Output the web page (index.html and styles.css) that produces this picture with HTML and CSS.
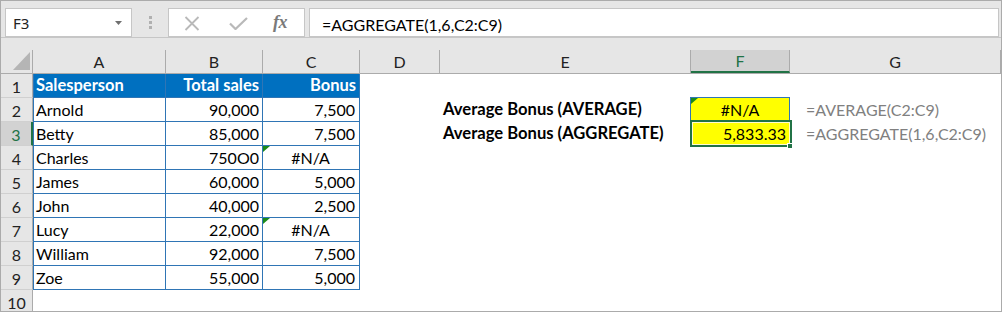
FILE: index.html
```html
<!DOCTYPE html>
<html lang="en">
<head>
<meta charset="utf-8">
<title>Average Bonus</title>
<link rel="stylesheet" href="styles.css">
</head>
<body>
<div class="app">
  <div class="formula-bar">
    <div class="name-box">
      <span>F3</span>
      <svg class="caret" width="7" height="4" viewBox="0 0 7 4"><path d="M0 0H7L3.5 4Z" fill="#6f6f6f"/></svg>
    </div>
    <div class="grip"><i></i><i></i><i></i></div>
    <div class="fx-buttons">
      <svg class="btn-x" width="16" height="15" viewBox="0 0 16 15"><path d="M1.5 1L14.5 14M14.5 1L1.5 14" stroke="#b9b9b9" stroke-width="1.8" fill="none"/></svg>
      <svg class="btn-ok" width="19" height="13" viewBox="0 0 19 13"><path d="M1 6.5L6.5 12L18 1" stroke="#b9b9b9" stroke-width="2.2" fill="none"/></svg>
      <span class="fx">fx</span>
    </div>
    <div class="formula-input">=AGGREGATE(1,6,C2:C9)</div>
  </div>

  <div class="sheet">
    <!-- column headers -->
    <div class="corner"><span class="corner-box"><svg width="17" height="18" viewBox="0 0 17 18"><path d="M17 0V18H0Z" fill="#b5b5b5"/></svg></span></div>
    <div class="col-head"><span>A</span></div>
    <div class="col-head"><span>B</span></div>
    <div class="col-head"><span>C</span></div>
    <div class="col-head"><span>D</span></div>
    <div class="col-head"><span>E</span></div>
    <div class="col-head active"><span>F</span></div>
    <div class="col-head"><span>G</span></div>

    <!-- row 1 -->
    <div class="row-head">1</div>
    <div class="cell t th first">Salesperson</div>
    <div class="cell t th num">Total sales</div>
    <div class="cell t th num">Bonus</div>
    <div class="cell"></div><div class="cell"></div><div class="cell"></div><div class="cell"></div>

    <!-- row 2 -->
    <div class="row-head">2</div>
    <div class="cell t first">Arnold</div>
    <div class="cell t num">90,000</div>
    <div class="cell t num c">7,500</div>
    <div class="cell"></div>
    <div class="cell label">Average Bonus (AVERAGE)</div>
    <div class="cell result avg err-mark">#N/A</div>
    <div class="cell note">=AVERAGE(C2:C9)</div>

    <!-- row 3 -->
    <div class="row-head active">3</div>
    <div class="cell t first">Betty</div>
    <div class="cell t num">85,000</div>
    <div class="cell t num c">7,500</div>
    <div class="cell"></div>
    <div class="cell label">Average Bonus (AGGREGATE)</div>
    <div class="cell result agg selected">5,833.33<span class="fill-handle"></span></div>
    <div class="cell note">=AGGREGATE(1,6,C2:C9)</div>

    <!-- row 4 -->
    <div class="row-head">4</div>
    <div class="cell t first">Charles</div>
    <div class="cell t num">750O0</div>
    <div class="cell t err c err-mark">#N/A</div>
    <div class="cell"></div><div class="cell"></div><div class="cell"></div><div class="cell"></div>

    <!-- row 5 -->
    <div class="row-head">5</div>
    <div class="cell t first">James</div>
    <div class="cell t num">60,000</div>
    <div class="cell t num c">5,000</div>
    <div class="cell"></div><div class="cell"></div><div class="cell"></div><div class="cell"></div>

    <!-- row 6 -->
    <div class="row-head">6</div>
    <div class="cell t first">John</div>
    <div class="cell t num">40,000</div>
    <div class="cell t num c">2,500</div>
    <div class="cell"></div><div class="cell"></div><div class="cell"></div><div class="cell"></div>

    <!-- row 7 -->
    <div class="row-head">7</div>
    <div class="cell t first">Lucy</div>
    <div class="cell t num">22,000</div>
    <div class="cell t err c err-mark">#N/A</div>
    <div class="cell"></div><div class="cell"></div><div class="cell"></div><div class="cell"></div>

    <!-- row 8 -->
    <div class="row-head">8</div>
    <div class="cell t first">William</div>
    <div class="cell t num">92,000</div>
    <div class="cell t num c">7,500</div>
    <div class="cell"></div><div class="cell"></div><div class="cell"></div><div class="cell"></div>

    <!-- row 9 -->
    <div class="row-head">9</div>
    <div class="cell t first">Zoe</div>
    <div class="cell t num">55,000</div>
    <div class="cell t num c">5,000</div>
    <div class="cell"></div><div class="cell"></div><div class="cell"></div><div class="cell"></div>

    <!-- row 10 -->
    <div class="row-head last">10</div>
    <div class="cell"></div><div class="cell"></div><div class="cell"></div><div class="cell"></div>
    <div class="cell"></div><div class="cell"></div><div class="cell"></div>
  </div>
</div>
</body>
</html>
```

FILE: styles.css
```css
* {
  box-sizing: border-box;
}

html, body {
  margin: 0;
  padding: 0;
  background: #ffffff;
}

body {
  font-family: "Lato", "Liberation Sans", sans-serif;
  font-size: 16px;
  color: #000000;
}

.app {
  width: 1002px;
  height: 312px;
  border: 1px solid #ababab;
  background: #e6e6e6;
  overflow: hidden;
}

/* ---------- formula bar ---------- */
.formula-bar {
  height: 37px;
  display: flex;
  align-items: flex-start;
  padding: 7px 2px 0 4px;
  border-bottom: 1px solid #c6c6c6;
}

.name-box,
.fx-buttons,
.formula-input {
  height: 29px;
  background: #ffffff;
  border: 1px solid #c6c6c6;
}

.name-box {
  width: 127px;
  display: flex;
  align-items: center;
  justify-content: space-between;
  padding: 0 9px 0 7px;
  font-family: "Noto Sans", "Open Sans", sans-serif;
  font-size: 15px;
  color: #222222;
}

.name-box span {
  padding-top: 1px;
}

.grip {
  width: 3px;
  margin: 8px 16px 0 17px;
  display: flex;
  flex-direction: column;
  gap: 2px;
}

.grip i {
  display: block;
  width: 3px;
  height: 3px;
  background: #b0b0b0;
}

.fx-buttons {
  width: 137px;
  display: flex;
  align-items: center;
  padding: 0 0 0 15px;
}

.btn-x {
  margin-top: 1px;
}

.btn-ok {
  margin-left: 29px;
  margin-top: 2px;
}

.fx {
  margin-left: 25px;
  font-family: "Liberation Serif", serif;
  font-style: italic;
  font-weight: bold;
  font-size: 18px;
  color: #7a7a7a;
  letter-spacing: -0.5px;
}

.formula-input {
  flex: 1;
  margin-left: 4px;
  padding: 6px 12px 0;
  line-height: 19px;
}

/* ---------- sheet grid ---------- */
.sheet {
  display: grid;
  grid-template-columns: 32px 133px 97px 97px 80px 251px 99px 211px;
  grid-template-rows: 36px repeat(9, 24px) 21px;
  background: #ffffff;
}

.corner,
.col-head {
  background: #e6e6e6;
  border-bottom: 1px solid #ababab;
  display: flex;
  align-items: flex-end;
}

.corner-box,
.col-head span {
  display: block;
  width: 100%;
  height: 23px;
  border-right: 1px solid #ababab;
}

.corner-box {
  padding: 2px 0 0 12px;
}

.corner-box svg {
  display: block;
}

.col-head span {
  text-align: center;
  line-height: 23px;
  color: #222222;
}

.col-head.active span {
  background: #d2d2d2;
  color: #217346;
  border-bottom: 2px solid #217346;
  line-height: 21px;
  height: 23px;
}

.row-head {
  background: #e6e6e6;
  border-right: 1px solid #ababab;
  border-bottom: 1px solid #d0d0d0;
  text-align: center;
  line-height: 25px;
  color: #222222;
}

.row-head.last {
  border-bottom: none;
}

.row-head.active {
  background: #d2d2d2;
  color: #217346;
  border-right: 2px solid #217346;
}

.cell {
  position: relative;
  line-height: 23px;
  padding: 0 3px;
  white-space: nowrap;
}

/* table region A1:C9 */
.cell.t {
  border-right: 1px solid #2f75b5;
  border-bottom: 1px solid #2f75b5;
}

.cell.first {
  border-left: 1px solid #2f75b5;
  padding-left: 2px;
}

.cell.th {
  background: #0070c0;
  color: #ffffff;
  font-weight: bold;
  font-size: 16.5px;
}

.cell.num {
  text-align: right;
}

.cell.c {
  padding-right: 4px;
}

.cell.err {
  text-align: center;
}

/* green error-check flag in the top-left corner */
.err-mark::before {
  content: "";
  position: absolute;
  left: 0;
  top: 0;
  border-top: 6px solid #1a8a1a;
  border-right: 7px solid transparent;
}

.cell.label {
  font-weight: bold;
  font-size: 16.6px;
  padding-left: 3px;
}

.cell.result {
  background: #ffff00;
}

.cell.avg {
  text-align: center;
  border: 1px solid #2f75b5;
  line-height: 22px;
  margin-left: -1px;
  margin-top: -1px;
  height: 25px;
  padding-top: 1px;
}

.cell.agg {
  text-align: right;
  padding-right: 4px;
}

/* active-cell frame drawn over the cell */
.cell.selected::after {
  content: "";
  position: absolute;
  left: -1px;
  top: -2px;
  right: -2px;
  bottom: -1px;
  border: 2px solid #217346;
  box-shadow: inset 0 0 0 1px #fffbd0;
  pointer-events: none;
}

.fill-handle {
  position: absolute;
  right: -3px;
  bottom: -3px;
  width: 6px;
  height: 6px;
  background: #217346;
  border: 1px solid #ffffff;
  z-index: 2;
}

.cell.note {
  color: #808080;
  padding-left: 16px;
}
```
